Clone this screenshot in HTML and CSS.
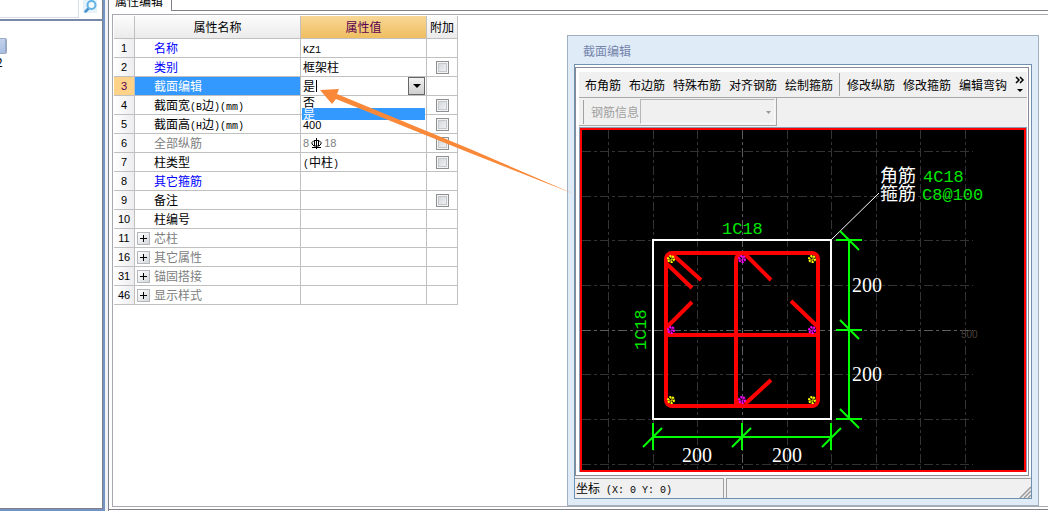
FILE: index.html
```html
<!DOCTYPE html>
<html lang="zh-CN">
<head>
<meta charset="utf-8">
<title>属性编辑</title>
<link rel="stylesheet" href="styles.css">
</head>
<body>
<div class="app">
  <aside class="side">
    <div class="search">
      <input class="search-box" type="text" aria-label="搜索">
      <button class="search-btn" type="button" aria-label="查找">
        <svg width="16" height="14" viewBox="0 0 16 14"><rect width="14" height="13" fill="#e6f2fa"/><path d="M2.500 11.500L6 8" stroke="#4a90cc" stroke-width="2.500" stroke-linecap="round"/><circle cx="8.500" cy="5" r="4" fill="#f2faff" stroke="#62b2e6" stroke-width="2"/></svg>
      </button>
    </div>
    <div class="tree">
      <div class="node-selected"></div>
      <div class="node-label">2</div>
    </div>
  </aside>

  <main class="main">
    <div class="tabs"><div class="tab">属性编辑</div><div class="tab-rest"></div></div>
    <div class="panel">
      <div class="sheet">
        <table class="props">
          <colgroup><col class="c-num"><col class="c-name"><col class="c-value"><col class="c-add"></colgroup>
          <thead><tr><th></th><th>属性名称</th><th class="hot">属性值</th><th>附加</th></tr></thead>
          <tbody>
            <tr><th>1</th><td class="name link">名称</td><td><span class="latin">KZ1</span></td><td></td></tr>
            <tr><th>2</th><td class="name link">类别</td><td>框架柱</td><td class="add"><input type="checkbox" aria-label="附加 类别"></td></tr>
            <tr class="current"><th>3</th><td class="name">截面编辑</td><td class="editor">
              <div class="combo"><input class="combo-text" type="text" value="是" aria-label="截面编辑"><button class="combo-btn" type="button" aria-label="展开"><svg width="8" height="4" viewBox="0 0 8 4"><path d="M0 0H8L4 4Z"/></svg></button></div>
              <ul class="options"><li>否</li><li class="chosen">是</li></ul>
            </td><td></td></tr>
            <tr><th>4</th><td class="name">截面宽<span class="latin">(B</span>边<span class="latin">)(mm)</span></td><td></td><td class="add"><input type="checkbox" aria-label="附加 截面宽"></td></tr>
            <tr><th>5</th><td class="name">截面高<span class="latin">(H</span>边<span class="latin">)(mm)</span></td><td><span class="num">400</span></td><td class="add"><input type="checkbox" aria-label="附加 截面高"></td></tr>
            <tr class="dim"><th>6</th><td class="name">全部纵筋</td><td><span class="bar"><span class="num">8</span><svg width="11" height="11" viewBox="0 0 11 11"><path d="M5.500 0V11M1 9.500H10M3 2.500H8L10 4.500V6L8 8H3L1 6V4.500Z" fill="none" stroke="#000"/><path d="M3.500 2V8M7.500 2V8" stroke="#000"/></svg><span class="num">18</span></span></td><td class="add"><input type="checkbox" aria-label="附加 全部纵筋"></td></tr>
            <tr><th>7</th><td class="name">柱类型</td><td><span class="latin">(</span>中柱<span class="latin">)</span></td><td class="add"><input type="checkbox" aria-label="附加 柱类型"></td></tr>
            <tr><th>8</th><td class="name link">其它箍筋</td><td></td><td></td></tr>
            <tr><th>9</th><td class="name">备注</td><td></td><td class="add"><input type="checkbox" aria-label="附加 备注"></td></tr>
            <tr><th>10</th><td class="name">柱编号</td><td></td><td></td></tr>
            <tr class="dim"><th>11</th><td class="group"><div class="fold"><button type="button" class="plus" aria-label="展开 芯柱"></button>芯柱</div></td><td></td><td></td></tr>
            <tr class="dim"><th>16</th><td class="group"><div class="fold"><button type="button" class="plus" aria-label="展开 其它属性"></button>其它属性</div></td><td></td><td></td></tr>
            <tr class="dim"><th>31</th><td class="group"><div class="fold"><button type="button" class="plus" aria-label="展开 锚固搭接"></button>锚固搭接</div></td><td></td><td></td></tr>
            <tr class="dim"><th>46</th><td class="group"><div class="fold"><button type="button" class="plus" aria-label="展开 显示样式"></button>显示样式</div></td><td></td><td></td></tr>
          </tbody>
        </table>
      </div>
    </div>
  </main>

  <section class="window">
    <h2 class="title">截面编辑</h2>
    <div class="client">
      <div class="frame">
        <div class="toolbar">
          <button type="button">布角筋</button><button type="button">布边筋</button><button type="button">特殊布筋</button><button type="button">对齐钢筋</button><button type="button">绘制箍筋</button>
          <span class="divider"></span>
          <button type="button">修改纵筋</button><button type="button">修改箍筋</button><button type="button">编辑弯钩</button>
          <button type="button" class="more" aria-label="更多"><svg width="10" height="18" viewBox="0 0 10 18"><path d="M1 1L4 4L1 7M5 1L8 4L5 7" fill="none" stroke="#000" stroke-width="1.500"/><path d="M2 13H8L5 16Z"/></svg></button>
        </div>
        <div class="info-row">
          <div class="info">
            <span class="grip"></span>
            <label for="rebar">钢筋信息</label>
            <div class="pick"><select id="rebar" disabled><option></option></select><svg width="5" height="3" viewBox="0 0 5 3"><path d="M0 0H5L2.500 3Z" fill="#999"/></svg></div>
          </div>
        </div>
        <svg class="drawing" viewBox="579 127 448 345" role="img" aria-label="柱截面">
          <rect x="579" y="127" width="448" height="345" fill="#8a9bb8"/>
          <rect x="581" y="129" width="444" height="342" fill="#000" stroke="#f00" stroke-width="2"/>
          <g stroke="#333" fill="none" stroke-dasharray="9 3 3 3">
            <path d="M608.500 130V469M653.500 130V469M697.500 130V469M787.500 130V469M831.500 130V469M876.500 130V469M920.500 130V469M965.500 130V469"/>
            <path d="M582 151.500H973M582 196.500H973M582 240.500H973M582 285.500H973M582 374.500H973M582 419.500H973M582 464.500H973"/>
            <path stroke="#5c5c5c" d="M742.500 130V469M582 330.500H973"/>
          </g>
          <text x="961" y="338" class="scale">500</text>
          <rect x="653" y="240" width="178" height="179" fill="none" stroke="#fff" stroke-width="2"/>
          <path d="M831 240L879 193" stroke="#fff"/>
          <g fill="none" stroke="#f00" stroke-width="4">
            <rect x="666" y="253" width="152" height="153" rx="6"/>
            <path d="M666 335H818M736 406V261Q736 254 742 254M736 395Q736 405 742 405M672 254L701 280M667 264L692 288M666 328L692 302M745 254L771 280M818 327L791 301M745 404L771 380"/>
          </g>
          <g fill="none" stroke-width="2" stroke-dasharray="2 1">
            <g stroke="#ff0"><circle cx="671" cy="259" r="3"/><circle cx="812" cy="259" r="3"/><circle cx="671" cy="400" r="3"/><circle cx="812" cy="400" r="3"/><path d="M668 259H674M671 256V262M809 259H815M812 256V262M668 400H674M671 397V403M809 400H815M812 397V403" stroke-width="1"/></g>
            <g stroke="#f0f"><circle cx="742" cy="259" r="3"/><circle cx="671" cy="330" r="3"/><circle cx="812" cy="330" r="3"/><circle cx="742" cy="400" r="3"/><path d="M739 259H745M742 256V262M668 330H674M671 327V333M809 330H815M812 327V333M739 400H745M742 397V403" stroke-width="1"/></g>
          </g>
          <path d="M653 437H831M653 423V450M742 423V450M831 423V450M849 240V419M836 240H862M836 330H862M836 419H862M643 447L662 428M732 447L751 428M822 447L841 428M840 231L859 250M840 320L859 339M840 409L859 428" fill="none" stroke="#0f0" stroke-width="2"/>
          <g class="dims">
            <text x="682" y="462">200</text><text x="772" y="462">200</text><text x="852" y="292">200</text><text x="852" y="381">200</text>
          </g>
          <g class="marks">
            <text x="722" y="234">1C18</text><text transform="translate(646 350) rotate(-90)">1C18</text>
            <text x="923" y="182">4C18</text><text x="922" y="200">C8@100</text>
          </g>
          <g class="notes"><text x="880" y="182">角筋</text><text x="880" y="200">箍筋</text></g>
        </svg>
      </div>
      <div class="status">
        <div class="coords">坐标<span class="latin"> (X: 0 Y: 0)</span></div>
        <div class="status-rest"><svg width="12" height="12" viewBox="0 0 12 12"><path d="M1 12L12 1M5 12L12 5M9 12L12 9" stroke="#999" stroke-width="1.500"/></svg></div>
      </div>
    </div>
  </section>

  <svg class="pointer" width="256" height="108" viewBox="319 88 256 108" aria-hidden="true"><path d="M320 90L339 89L337 94L470 149L574 194L470 153L336 99L332 104Z" fill="#f98939"/></svg>
</div>
</body>
</html>
```
FILE: styles.css
```css
* { box-sizing: border-box; }
body {
  margin: 0;
  background: #f2f3f7;
  color: #000;
  font: 12px/18px "Noto Sans CJK SC", sans-serif;
}
button, input, select { font: inherit; color: inherit; border-radius: 0; }
button { margin: 0; padding: 0; border: 0; background: none; }
svg { display: block; }
.latin { font-family: "Liberation Mono", monospace; font-size: 10px; line-height: 10px; white-space: pre; }
.num { font-family: "Liberation Sans", sans-serif; font-size: 11px; line-height: 11px; }

.app { position: relative; display: flex; gap: 3px; min-height: 100vh; overflow: hidden; }

.side {
  display: flex;
  flex-direction: column;
  width: 105px;
  background: #fff;
  border-right: 2px solid #7394c4;
  border-bottom: 2px solid #7394c4;
  box-shadow: inset -1px -1px #808088;
}
.search { display: flex; gap: 4px; height: 21px; border-bottom: 2px solid #7888a8; }
.search-box { width: 79px; height: 18px; border: solid #d8dde4; border-width: 0 1px 1px 0; background: #fff; }
.search-btn { align-self: flex-start; }
.tree { padding-top: 17px; overflow: hidden; }
.node-selected { width: 7px; height: 16px; border: solid #9baac4; border-width: 1px 2px 1px 0; border-radius: 0 2px 2px 0; background: linear-gradient(#c3d2ed, #a9bee2); }
.node-label { text-indent: -4px; line-height: 16px; }

.main { display: flex; flex: 1; flex-direction: column; background: #fff; border-left: 1px solid #808088; }
.tabs { display: flex; height: 11px; }
.tab { display: flex; align-items: flex-end; width: 63px; height: 11px; padding-left: 6px; border-right: 1px solid #808088; line-height: 20px; overflow: hidden; }
.tab-rest { flex: 1; border-bottom: 1px solid #808088; }
.panel { flex: 1; padding: 3px 0 2px 3px; margin-bottom: 1px; border-bottom: 1px solid #808088; }
.sheet { height: 100%; padding: 1px; border: solid #a8a8b0; border-width: 1px 0 1px 1px; }

.props { width: 344px; table-layout: fixed; border-collapse: separate; border-spacing: 0; }
.c-num { width: 21px; }
.c-name { width: 166px; }
.c-value { width: 126px; }
.c-add { width: 31px; }
.props th, .props td { height: 19px; padding: 0 2px; border: solid #c0c0c0; border-width: 0 1px 1px 0; font-weight: normal; line-height: 18px; text-align: left; white-space: nowrap; }
.props th { padding: 0; text-align: center; background: linear-gradient(90deg, #fff, #ededf0); }
.props tbody th { font-family: "Liberation Sans", sans-serif; font-size: 11px; }
.props thead th { height: 23px; background: linear-gradient(#fcfcfc, #ebebeb); }
.props thead .hot { color: #5a0050; background: linear-gradient(#f8d795, #efbe61); }
.props .name { padding-left: 19px; }
.props .link { color: #00f; }
.props .dim td { color: #808080; }
.props .current th { background: #ffd28a; color: #5a0050; }
.props .current .name { background: #3399ff; color: #fff; }
.props .add { text-align: center; }
.add input { display: block; width: 13px; height: 13px; margin: 0 auto; appearance: none; border: 1px solid #8e8f8f; background: linear-gradient(135deg, #cfd3d8, #f6f6f6); box-shadow: inset 0 0 0 1px #f4f4f4, inset 0 0 0 2px #c4c8cc; }
.bar { display: flex; align-items: center; gap: 2px; height: 18px; }
.props .group { padding-left: 2px; }
.fold { display: flex; align-items: center; gap: 4px; }
.plus { width: 13px; height: 13px; border: 1px solid #b4b8bc; background: linear-gradient(#000, #000) center / 7px 1px no-repeat, linear-gradient(#000, #000) center / 1px 7px no-repeat, linear-gradient(135deg, #fff, #d4d8dc); }

.props .editor { position: relative; padding: 0 1px; }
.combo { display: flex; height: 18px; }
.combo-text { flex: 1; min-width: 0; height: 18px; padding: 0 1px; border: 0; outline: 0; background: linear-gradient(#000, #000) 14px 3px / 1px 12px no-repeat; }
.combo-btn { display: grid; place-items: center; width: 17px; height: 18px; border: 1px solid #666; background: linear-gradient(#f2f2f2, #cfcfcf); }
.options { position: absolute; z-index: 1; top: 19px; left: 1px; right: 1px; margin: 0; padding: 0; list-style: none; background: #fff; }
.options li { height: 12px; padding-left: 1px; line-height: 12px; overflow: hidden; }
.options .chosen { background: #3399ff; color: #fff; }

.window { position: absolute; top: 35px; left: 567px; width: 472px; padding: 0 6px; border: 1px solid #a0b0c0; background: #dfebf7; }
.title { margin: 0; padding: 6px 9px 4px; font-size: 12px; font-weight: normal; line-height: 18px; color: #7484ac; }
.client { margin-bottom: 6px; border: 1px solid #7090b0; background: #fff; }
.frame { margin: 2px 2px 0 0; padding: 4px 1px 3px 3px; border: 1px solid #8a8a94; }
.toolbar { display: flex; align-items: center; gap: 8px; height: 26px; padding: 0 1px 0 6px; border-bottom: 1px solid #a8a8a8; background: #f0f0f0; white-space: nowrap; }
.toolbar button { flex: none; line-height: 18px; }
.divider { width: 1px; height: 23px; margin: 0 -1px 0 -2px; background: #a8a8a8; }
.more { display: block; }
.info-row { display: flex; padding-bottom: 1px; background: #f0f0f0; }
.info { display: flex; align-items: center; height: 28px; padding: 0 1px 0 4px; border: solid #a8a8a8; border-width: 0 1px 1px 0; color: #a0a0a0; }
.grip { width: 1px; height: 24px; margin-right: 7px; background: #a0a0a0; }
.pick { position: relative; margin-left: 1px; }
.pick select { display: block; width: 135px; height: 25px; appearance: none; border: 1px solid; border-color: #a0a0a0 #fff #fff #a0a0a0; background: #f0f0f0; }
.pick svg { position: absolute; top: 12px; right: 4px; }
.drawing { width: 100%; height: auto; }
.dims { font: 20px "Liberation Serif", serif; fill: #fff; }
.marks { font: 17px "Liberation Mono", monospace; fill: #00e600; }
.notes { font: 18px "Noto Sans CJK SC", sans-serif; fill: #fff; }
.scale { font: 10px "Liberation Sans", sans-serif; fill: #4a4038; }
.status { display: flex; gap: 2px; height: 22px; padding-top: 2px; background: #f0f0f0; }
.coords { width: 149px; padding-left: 1px; border: solid #a0a0a0; border-width: 1px 1px 0 0; }
.status-rest { display: flex; flex: 1; align-items: flex-end; justify-content: flex-end; border: solid #a0a0a0; border-width: 1px 0 0 1px; }

.pointer { position: absolute; top: 88px; left: 319px; z-index: 2; }
```
